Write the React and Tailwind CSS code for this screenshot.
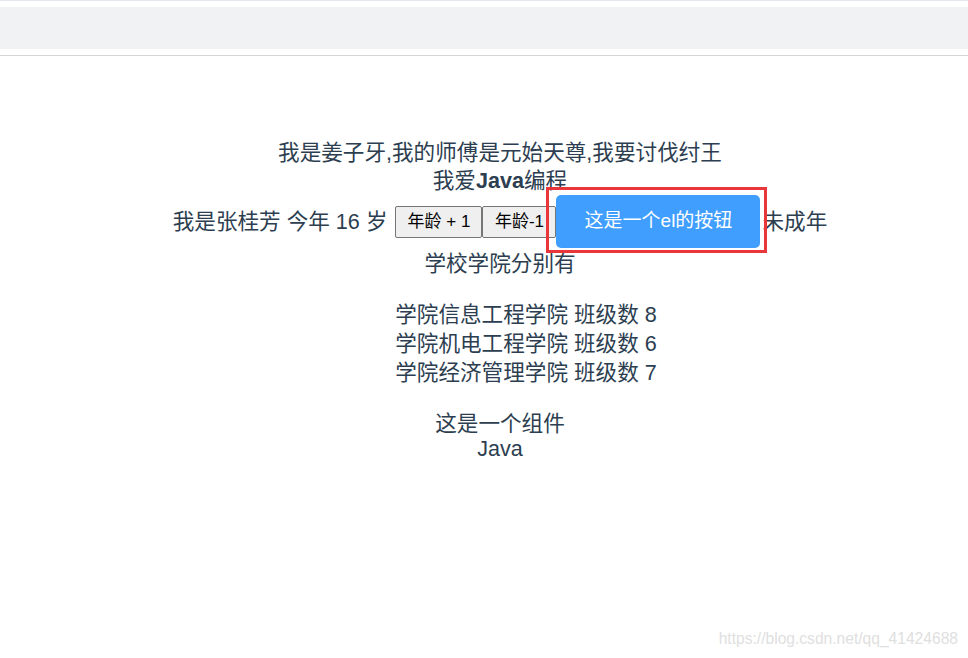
export default function App() {
  const colleges = [
    { name: "信息工程学院", classes: 8 },
    { name: "机电工程学院", classes: 6 },
    { name: "经济管理学院", classes: 7 },
  ];

  return (
    <div
      className="relative min-h-[658px] bg-white text-[#2c3e50]"
      style={{ fontFamily: '"Liberation Sans", "Noto Sans CJK SC", sans-serif' }}
    >
      {/* top bar */}
      <div className="border-t border-[#e4e7ed] pt-[6px]">
        <div className="h-[42px] bg-[#f1f2f4]" />
      </div>
      <div className="h-[6px]" />
      <div className="h-px bg-[#d6d6d6]" />

      {/* page content */}
      <div className="pl-8 pt-[83px] text-center text-[21.6px]">
        <p className="leading-[28px]">我是姜子牙,我的师傅是元始天尊,我要讨伐纣王</p>
        <p className="leading-[28px]">
          我爱<b>Java</b>编程
        </p>

        <div className="flex h-[53px] items-center justify-center whitespace-pre">
          <span className="leading-[28px]">我是张桂芳 今年 16 岁</span>
          <button className="ml-[8px] h-[32px] w-[87px] rounded-[2px] border border-[#767676] bg-[#efefef] text-[17px] text-black">
            年龄 + 1
          </button>
          <button className="h-[32px] w-[74px] rounded-[2px] border border-[#767676] bg-[#efefef] text-[17px] text-black">
            年龄-1
          </button>
          <div className="relative">
            <button className="flex h-[53px] w-[204px] items-center justify-center rounded-[5px] bg-[#409eff] text-[19px] text-white">
              这是一个el的按钮
            </button>
            <div className="pointer-events-none absolute -top-[8px] -bottom-[5px] -left-[10px] -right-[7px] border-[3px] border-[#e8363a]" />
          </div>
          <span className="ml-[2px] leading-[28px]">未成年</span>
        </div>

        <p className="mt-[2px] leading-[28px]">学校学院分别有</p>

        <ul className="mt-[22px] pl-[52px] leading-[29px]">
          {colleges.map((c) => (
            <li key={c.name}>
              学院{c.name} 班级数 {c.classes}
            </li>
          ))}
        </ul>

        <div className="mt-[24px] leading-[25px]">
          <p>这是一个组件</p>
          <p>Java</p>
        </div>
      </div>

      <div className="absolute right-[10px] top-[627px] text-[15.6px] text-[#e0e0e0]">
        https://blog.csdn.net/qq_41424688
      </div>
    </div>
  );
}
